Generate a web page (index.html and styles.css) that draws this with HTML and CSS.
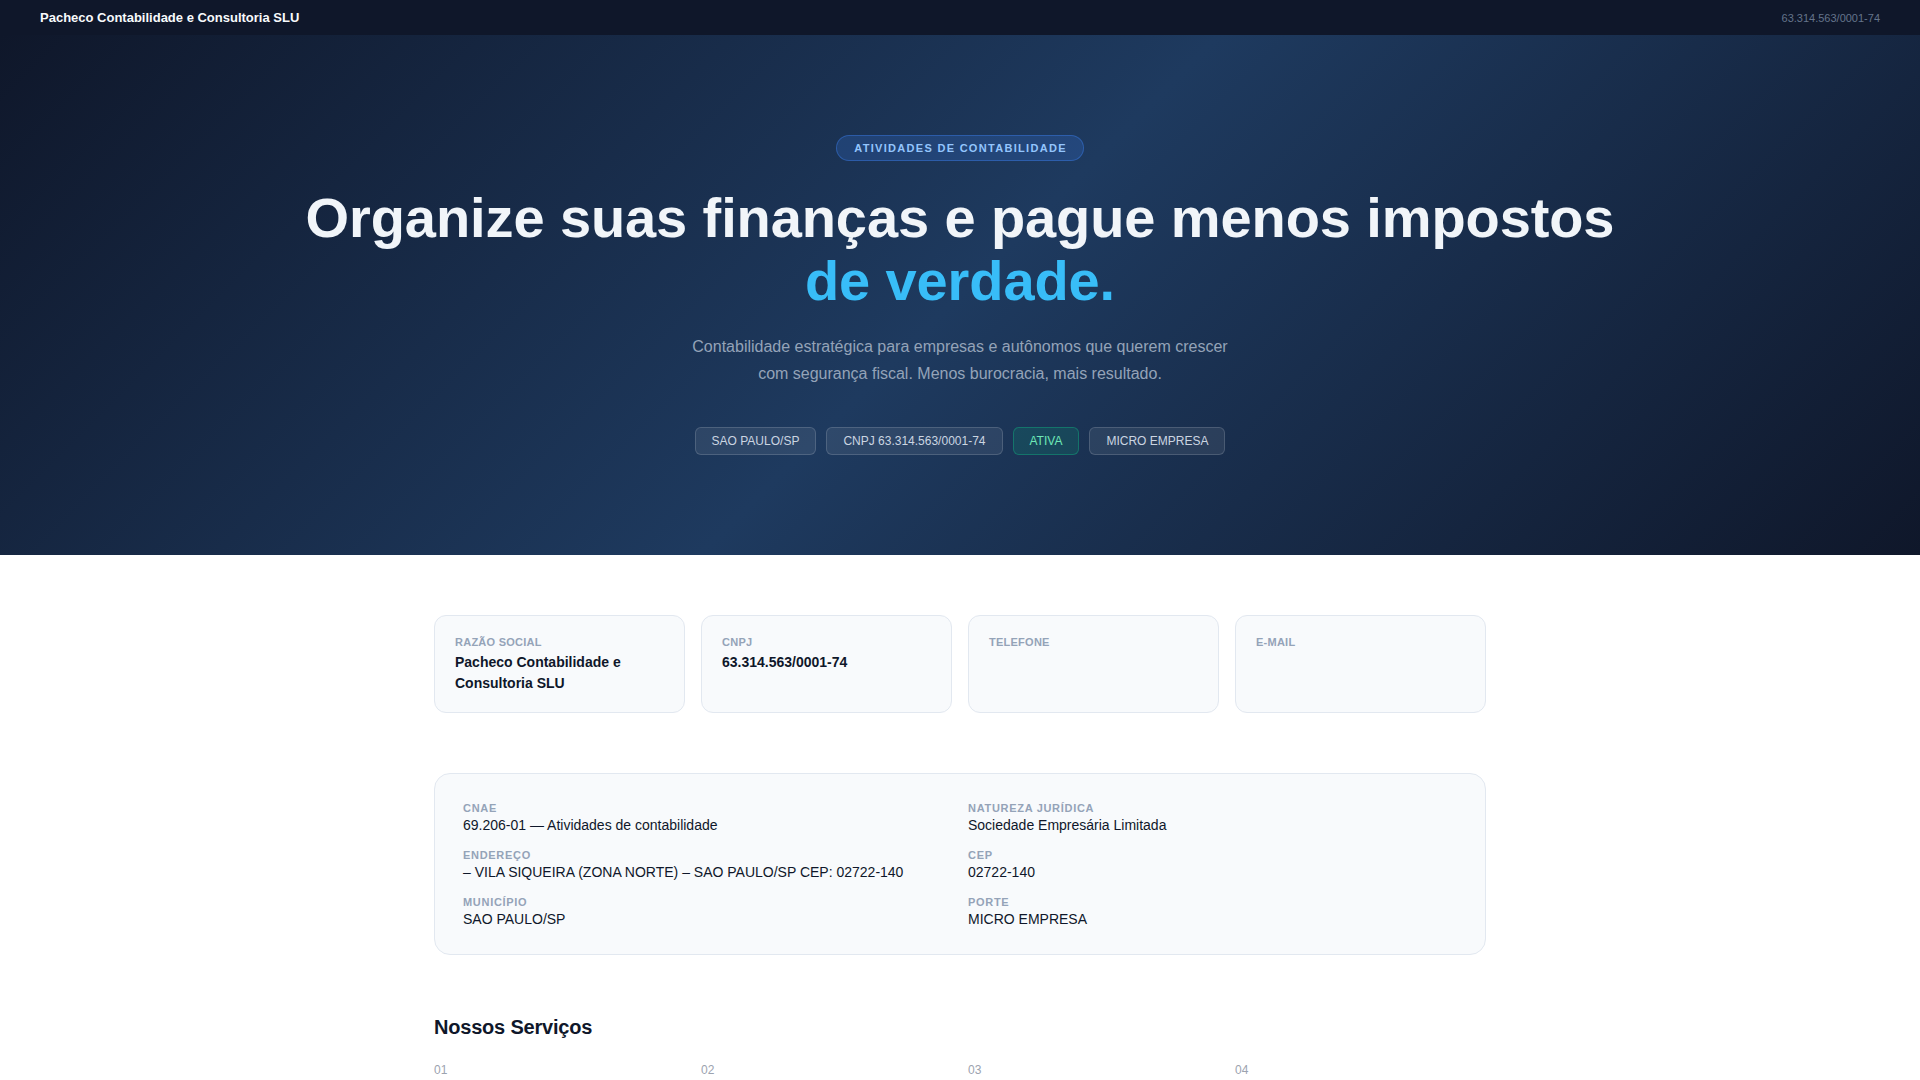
FILE: index.html
```html
<!DOCTYPE html>
<html lang="pt-BR">
<head>
<meta charset="utf-8">
<title>Pacheco Contabilidade e Consultoria SLU</title>
<link rel="stylesheet" href="styles.css">
</head>
<body>
<header class="nav">
  <div class="brand">Pacheco Contabilidade e Consultoria SLU</div>
  <div class="nav-cnpj">63.314.563/0001-74</div>
</header>

<section class="hero">
  <div class="hero-inner">
    <span class="badge">ATIVIDADES DE CONTABILIDADE</span>
    <h1 class="hero-title">Organize suas finanças e pague menos impostos<br><span class="accent">de verdade.</span></h1>
    <p class="hero-sub">Contabilidade estratégica para empresas e autônomos que querem crescer com segurança fiscal. Menos burocracia, mais resultado.</p>
    <div class="pills">
      <span class="pill">SAO PAULO/SP</span>
      <span class="pill">CNPJ 63.314.563/0001-74</span>
      <span class="pill pill-green">ATIVA</span>
      <span class="pill">MICRO EMPRESA</span>
    </div>
  </div>
</section>

<main class="content">
  <div class="cards">
    <div class="card">
      <div class="card-label">RAZÃO SOCIAL</div>
      <div class="card-value">Pacheco Contabilidade e Consultoria SLU</div>
    </div>
    <div class="card">
      <div class="card-label">CNPJ</div>
      <div class="card-value">63.314.563/0001-74</div>
    </div>
    <div class="card">
      <div class="card-label">TELEFONE</div>
      <div class="card-value"></div>
    </div>
    <div class="card">
      <div class="card-label">E-MAIL</div>
      <div class="card-value"></div>
    </div>
  </div>

  <div class="info">
    <div class="info-item">
      <div class="info-label">CNAE</div>
      <div class="info-value">69.206-01 — Atividades de contabilidade</div>
    </div>
    <div class="info-item">
      <div class="info-label">NATUREZA JURÍDICA</div>
      <div class="info-value">Sociedade Empresária Limitada</div>
    </div>
    <div class="info-item">
      <div class="info-label">ENDEREÇO</div>
      <div class="info-value">– VILA SIQUEIRA (ZONA NORTE) – SAO PAULO/SP CEP: 02722-140</div>
    </div>
    <div class="info-item">
      <div class="info-label">CEP</div>
      <div class="info-value">02722-140</div>
    </div>
    <div class="info-item">
      <div class="info-label">MUNICÍPIO</div>
      <div class="info-value">SAO PAULO/SP</div>
    </div>
    <div class="info-item">
      <div class="info-label">PORTE</div>
      <div class="info-value">MICRO EMPRESA</div>
    </div>
  </div>

  <section class="services">
    <h2 class="services-title">Nossos Serviços</h2>
    <div class="svc-grid">
      <div class="svc">
        <div class="svc-num">01</div>
        <div class="svc-name">Abertura de empresas</div>
        <p class="svc-desc">Registro completo e enquadramento tributário ideal.</p>
      </div>
      <div class="svc">
        <div class="svc-num">02</div>
        <div class="svc-name">Planejamento tributário</div>
        <p class="svc-desc">Redução legal da carga de impostos.</p>
      </div>
      <div class="svc">
        <div class="svc-num">03</div>
        <div class="svc-name">Folha de pagamento</div>
        <p class="svc-desc">Gestão de funcionários, pró-labore e encargos.</p>
      </div>
      <div class="svc">
        <div class="svc-num">04</div>
        <div class="svc-name">Imposto de renda</div>
        <p class="svc-desc">Declarações para pessoa física e jurídica.</p>
      </div>
    </div>
  </section>
</main>
</body>
</html>
```

FILE: styles.css
```css
* {
  box-sizing: border-box;
}

body {
  margin: 0;
  font-family: "Liberation Sans", Arial, sans-serif;
  background: #ffffff;
  color: #0f172a;
}

/* NAV */
.nav {
  height: 35px;
  background: #0f172a;
  display: flex;
  align-items: center;
  justify-content: space-between;
  padding: 0 40px;
}

.brand {
  color: #f8fafc;
  font-size: 13px;
  font-weight: 700;
}

.nav-cnpj {
  color: #64748b;
  font-size: 11px;
}

/* HERO */
.hero {
  background: linear-gradient(135deg, #0f172a 0%, #1e3a5f 50%, #0f172a 100%);
  height: 520px;
  padding: 100px 24px 0;
}

.hero-inner {
  display: flex;
  flex-direction: column;
  align-items: center;
  text-align: center;
}

.badge {
  display: inline-block;
  padding: 6px 16px 5px 17px;
  line-height: 13px;
  font-size: 11px;
  font-weight: 700;
  letter-spacing: 1.3px;
  color: #93c5fd;
  background: rgba(59, 130, 246, 0.2);
  border: 1px solid rgba(59, 130, 246, 0.4);
  border-radius: 999px;
}

.hero-title {
  margin: 25px 0 0;
  font-size: 56px;
  line-height: 1.13;
  font-weight: 700;
  color: #f1f5f9;
  letter-spacing: -0.1px;
}

.accent {
  color: #38bdf8;
}

.hero-sub {
  margin: 20px 0 0;
  max-width: 560px;
  font-size: 16px;
  line-height: 1.7;
  color: #94a3b8;
}

.pills {
  margin-top: 40px;
  display: flex;
  gap: 10px;
  justify-content: center;
}

.pill {
  display: inline-block;
  padding: 6px 16px;
  line-height: 14px;
  font-size: 12px;
  color: #cbd5e1;
  background: rgba(255, 255, 255, 0.08);
  border: 1px solid rgba(255, 255, 255, 0.15);
  border-radius: 6px;
}

.pill-green {
  color: #6ee7b7;
  background: rgba(16, 185, 129, 0.15);
  border-color: rgba(16, 185, 129, 0.4);
}

/* CONTENT */
.content {
  max-width: 1100px;
  margin: 0 auto;
  padding: 60px 24px 80px;
}

.cards {
  display: grid;
  grid-template-columns: repeat(4, 1fr);
  gap: 16px;
}

.card {
  background: #f8fafc;
  border: 1px solid #e2e8f0;
  border-radius: 12px;
  padding: 19px 20px 17px;
  min-height: 98px;
}

.card-label {
  font-size: 11px;
  line-height: 14px;
  font-weight: 700;
  letter-spacing: 0.25px;
  color: #94a3b8;
  margin-bottom: 3px;
}

.card-value {
  font-size: 14px;
  line-height: 21px;
  font-weight: 700;
  color: #0f172a;
}

.info {
  margin-top: 60px;
  background: #f8fafc;
  border: 1px solid #e2e8f0;
  border-radius: 16px;
  padding: 28px 28px 27px;
  display: grid;
  grid-template-columns: 1fr 1fr;
  column-gap: 16px;
  row-gap: 16px;
}

.info-label {
  font-size: 11px;
  line-height: 13px;
  font-weight: 700;
  letter-spacing: 0.7px;
  color: #94a3b8;
  margin-bottom: 2px;
}

.info-value {
  font-size: 14px;
  line-height: 16px;
  color: #0f172a;
}

.services {
  margin-top: 59px;
}

.services-title {
  margin: 0 0 22px;
  font-size: 20px;
  line-height: 26px;
  font-weight: 700;
  letter-spacing: -0.2px;
  color: #0f172a;
}

.svc-grid {
  display: grid;
  grid-template-columns: repeat(4, 1fr);
  gap: 16px;
}

.svc-num {
  font-size: 12px;
  line-height: 1.4;
  color: #9ca3af;
  margin-bottom: 8px;
}

.svc-name {
  font-size: 16px;
  font-weight: 700;
  color: #0f172a;
  margin-bottom: 6px;
}

.svc-desc {
  margin: 0;
  font-size: 14px;
  line-height: 1.5;
  color: #64748b;
}
```
